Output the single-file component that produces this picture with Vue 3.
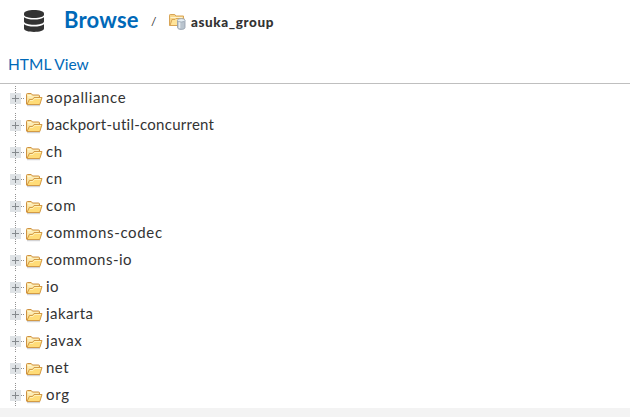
<script setup>
const folders = [
  { name: 'aopalliance', tracking: 0.64 },
  { name: 'backport-util-concurrent', tracking: 0.26 },
  { name: 'ch', tracking: 0.7 },
  { name: 'cn', tracking: 0.7 },
  { name: 'com', tracking: 0.8 },
  { name: 'commons-codec', tracking: 0.66 },
  { name: 'commons-io', tracking: 0.48 },
  { name: 'io', tracking: 0.3 },
  { name: 'jakarta', tracking: 0.42 },
  { name: 'javax', tracking: 0.6 },
  { name: 'net', tracking: 0.5 },
  { name: 'org', tracking: 0.75 },
]
</script>

<template>
  <div class="page">
    <header class="header">
      <svg class="database" width="20" height="22" viewBox="0 0 20 22">
        <path d="M0 3.400C0 1.300 4.500 0 10 0s10 1.300 10 3.400v1.400c0 2-4.500 3.200-10 3.200S0 6.800 0 4.800z" />
        <path d="M0 7.300c2 1.600 5.700 2.300 10 2.300s8-.7 10-2.300v4.300c0 2-4.500 3.200-10 3.200S0 13.600 0 11.600z" />
        <path d="M0 14.200c2 1.600 5.700 2.300 10 2.300s8-.7 10-2.300v4.400c0 2.100-4.500 3.400-10 3.400S0 20.700 0 18.600z" />
      </svg>
      <a class="browse">Browse</a>
      <span class="slash">/</span>
      <svg class="repo-icon" width="17" height="17" viewBox="0 0 17 17">
        <path d="M.5 12.500V2.200q0-.7.700-.7h4.600l1 1.500h7.700v9.500z" fill="#f8d68b" stroke="#d8a557" />
        <path d="M1.500 4.500h12" stroke="#fff3cc" />
        <path d="M1 12.500l2-6h3l1-1h8v7z" fill="#ffe49a" stroke="#d8a557" />
        <path d="M8.500 7.500v7c0 2.600 7.500 2.600 7.500 0v-7z" fill="#b9c4ce" stroke="#8f9ba8" stroke-width=".8" />
        <path d="M10.500 8.500v6.700" stroke="#e6edf2" stroke-width="1.600" />
        <ellipse cx="12.250" cy="7.300" rx="3.800" ry="1.700" fill="#e4edf3" stroke="#98a5b1" stroke-width=".8" />
      </svg>
      <h1 class="repo">asuka_group</h1>
    </header>
    <nav class="view"><a>HTML View</a></nav>
    <ul class="tree">
      <li v-for="folder in folders" :key="folder.name" class="node">
        <svg class="expander" width="16" height="26" viewBox="0 0 16 26" shape-rendering="crispEdges">
          <path d="M5.500 1v23" stroke="#929292" stroke-dasharray="1 1" />
          <path d="M11 13.500h4" stroke="#929292" stroke-dasharray="1 1" />
          <rect y="8" width="11" height="11" fill="#dfe3e6" />
          <path d="M2 13.500h7M5.500 10v7" stroke="#858a8e" />
        </svg>
        <svg class="folder" width="17" height="14" viewBox="0 0 17 14">
          <path d="M1 12.700h13" stroke="#c9c9cc" />
          <path d="M.5 11V1.500q0-1 1-1h3.700l1.300 1.500h6q1 0 1 1v8z" fill="#fae3a0" stroke="#cf9140" />
          <path d="M1.500 2.500h4M2 4h10" stroke="#fff6cf" />
          <path d="M1 11.500l2.300-5h3.200l1.500-2h8L13.800 11.500z" fill="#ffdc78" stroke="#d39a45" />
          <path d="M4 7.500h3l1.500-2H15" fill="none" stroke="#fff1b8" />
        </svg>
        <span class="name" :style="{ letterSpacing: folder.tracking + 'px' }">{{ folder.name }}</span>
      </li>
    </ul>
    <footer class="footer"></footer>
  </div>
</template>

<style>
body { margin: 0; background: #fff; }
</style>

<style scoped>
.page {
  display: flex;
  flex-direction: column;
  width: 630px;
  height: 417px;
  overflow: hidden;
  font-family: Lato, "Open Sans", sans-serif;
  color: #333;
}
.header {
  display: flex;
  align-items: flex-start;
  height: 48px;
  padding-left: 24px;
}
.database { margin-top: 10px; fill: #333; }
.browse {
  width: 74px;
  margin: 6px 0 0 20px;
  font-size: 22px;
  font-weight: 700;
  line-height: 28px;
  letter-spacing: 0.2px;
  color: #0069b8;
}
.slash { width: 5px; margin: 13px 13px 0; font-size: 12px; line-height: 18px; }
.repo-icon { margin: 13px 5px 0 0; }
.repo {
  margin: 12px 0 0;
  font-size: 13.5px;
  font-weight: 900;
  line-height: 20px;
  letter-spacing: 0.6px;
}
.view {
  height: 35px;
  padding-left: 8px;
  font-size: 15.5px;
  line-height: 33px;
  color: #0069b8;
  border-bottom: 1px solid #bfbfbf;
}
.tree { height: 324px; margin: 0; padding: 0 0 0 10px; list-style: none; }
.node { display: flex; align-items: flex-start; height: 27px; }
.expander { margin-top: 1px; }
.folder { margin: 9px 3px 0 0; }
.name { font-size: 15px; line-height: 26px; white-space: nowrap; }
.footer { flex: 1; background: #f3f3f3; }
</style>
